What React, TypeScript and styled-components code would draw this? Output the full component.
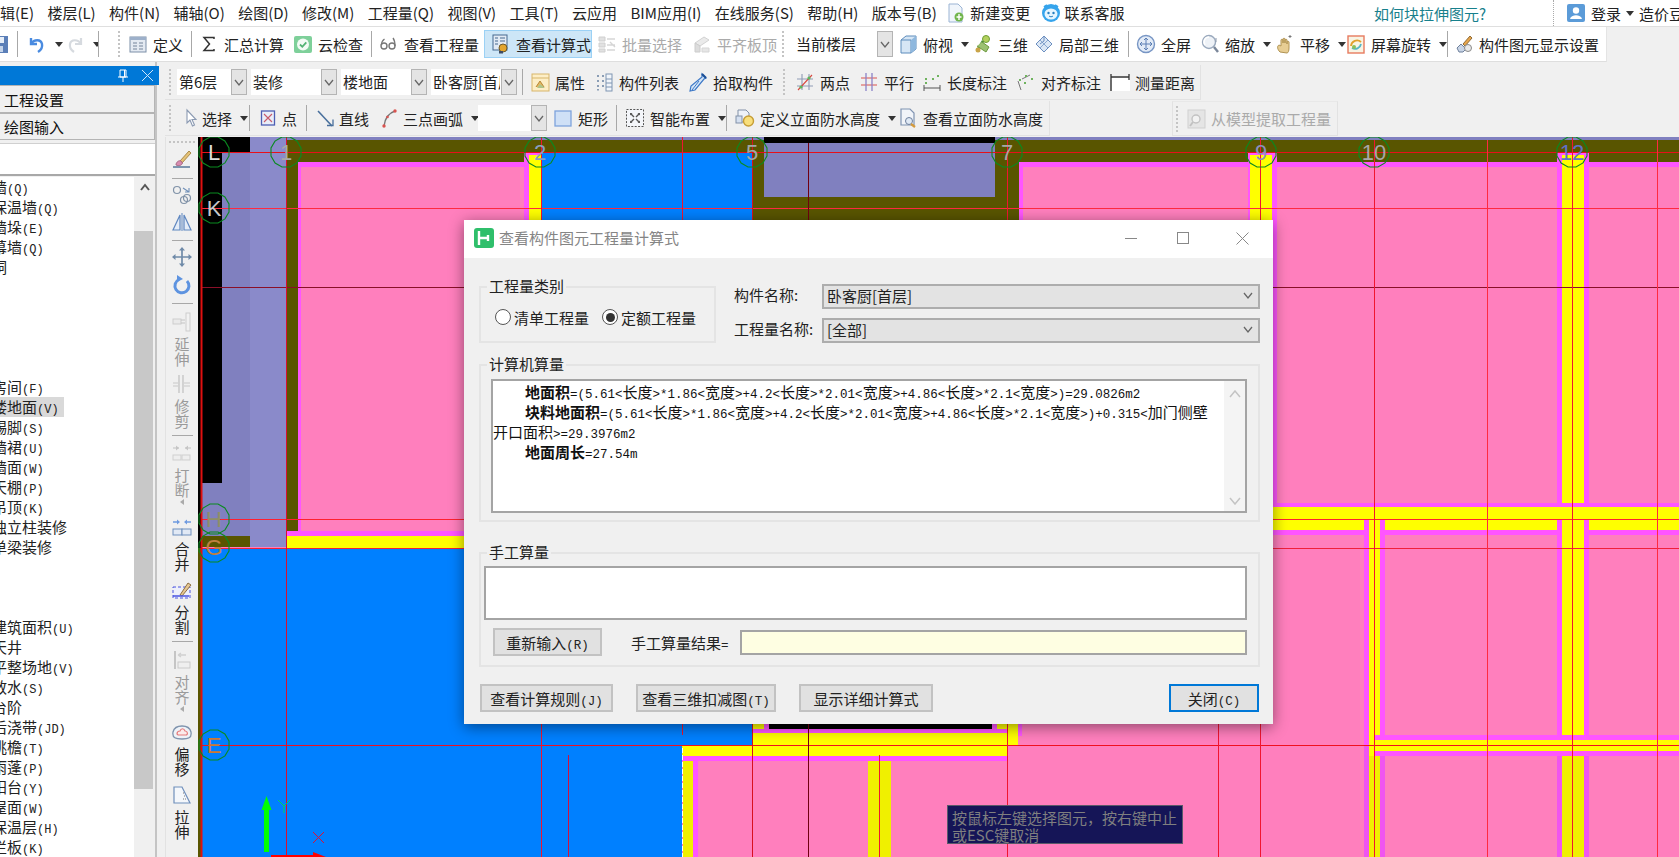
import React from 'react';
import styled, { createGlobalStyle } from 'styled-components';

const Global = createGlobalStyle`
  html, body { margin: 0; padding: 0; background: #f0f0f0; overflow: hidden; }
  * { box-sizing: border-box; }
`;

const UI = `"Noto Sans CJK SC", "Liberation Sans", sans-serif`;
const CJK = `"Noto Sans CJK SC", sans-serif`;
const MONO = `"Liberation Mono", monospace`;

/* ---------- icons ---------- */
const P = (d: string, stroke: string, w = 1.3, fill = 'none') => <path d={d} stroke={stroke} strokeWidth={w} fill={fill} />;
const icons: Record<string, React.ReactNode> = {
  save: <><rect x="1" y="2" width="18" height="17" fill="#5b7fb8" /><rect x="5" y="3" width="10" height="6" fill="#e6eef8" /><rect x="6" y="12" width="8" height="6" fill="#c4d4ea" /></>,
  undo: <>{P('M4 4v6h6', '#4a8be0', 2.4)}{P('M4 10c3-5 10-5 11 0 .6 3-1 6-4 8', '#4a8be0', 2.4)}</>,
  redo: <>{P('M16 4v6h-6', '#cfd4da', 2.2)}{P('M16 10c-3-5-10-5-11 0-.6 3 1 6 4 8', '#cfd4da', 2.2)}</>,
  define: <><rect x="2" y="3" width="16" height="15" fill="#e4eaf2" stroke="#7d8fa8" /><rect x="2" y="3" width="16" height="3" fill="#9db0ca" /><path d="M5 9h4M11 9h4M5 12h4M11 12h4M5 15h4M11 15h4" stroke="#75849a" /></>,
  sum: <>{P('M15 5V3.5H5l5.5 6.5L5 16.5h10V15', '#333', 1.5)}</>,
  check: <><rect x="1" y="2" width="18" height="17" rx="2" fill="#7ed09a" /><circle cx="10" cy="10.5" r="6" fill="#f2fbf5" />{P('M7 10.5l2.3 2.3 4-4.5', '#52b374', 1.8)}</>,
  glasses: <><circle cx="5" cy="12" r="3" fill="none" stroke="#777" strokeWidth="1.4" />{P('M2.5 11c0-3 1.5-5 3-6', '#777', 1.3)}<circle cx="13" cy="12" r="3" fill="none" stroke="#777" strokeWidth="1.4" />{P('M16 12c0-3-.5-6-2-8', '#777', 1.3)}</>,
  formula: <><rect x="2" y="1" width="14" height="15" fill="#e2eaf4" stroke="#47688f" /><path d="M4 4h3M9 4h5M4 7h3M9 7h5M4 10h3" stroke="#47688f" /><circle cx="12" cy="14" r="4" fill="#e3a52e" stroke="#6d5a2b" /><rect x="8" y="17" width="4" height="2.5" fill="#3d4c66" /></>,
  batch: <><path d="M2 3h6v4H2zM2 9h6v4H2zM2 15h6v3H2z" fill="#dcdcdc" stroke="#c8c8c8" /><path d="M10 5h8M10 11h8M10 16h8M13 8l5 5" stroke="#cfcfcf" strokeWidth="1.4" /></>,
  level: <><path d="M3 9l9-6 5 3-9 6z" fill="#e7e7e7" stroke="#cbcbcb" /><path d="M3 9v9h5v-6z" fill="#d6d6d6" stroke="#c4c4c4" /><path d="M10 14h7v4h-7z" fill="#e2e2e2" stroke="#cfcfcf" /></>,
  topview: <><path d="M3 6l5-4h10v13l-5 4H3z" fill="#d6e6f5" stroke="#5d8cbc" /><path d="M3 6h10v13" fill="none" stroke="#5d8cbc" /><path d="M13 6l5-4v13l-5 4z" fill="#8fb8de" /></>,
  three: <><circle cx="13" cy="5" r="3.5" fill="#b4d15f" stroke="#6f9e35" /><path d="M10 7L4 17" stroke="#4e8f3b" strokeWidth="2.6" /><path d="M4 12l9 6 3-5-7-5" fill="#9bc172" stroke="#6c9a3f" /><circle cx="5" cy="16" r="2.5" fill="#c9a448" /></>,
  local: <><path d="M10 2l8 8-8 8-8-8z" fill="#dbe7f5" stroke="#6c8fc0" /><path d="M6 6l8 8M14 6l-8 8" stroke="#8aa8d0" /><path d="M10 2v5l-4 3" stroke="#6c8fc0" fill="none" /></>,
  full: <><circle cx="10" cy="10" r="8.5" fill="#e2ebf7" stroke="#7795c4" strokeWidth="1.4" />{P('M10 4v12M4 10h12M10 4l-2 2M10 4l2 2M10 16l-2-2M10 16l2-2M4 10l2-2M4 10l2 2M16 10l-2-2M16 10l-2 2', '#5c7fb4', 1)}</>,
  zoom: <><circle cx="9" cy="8" r="6.5" fill="#eef2f7" stroke="#9aa9bd" strokeWidth="1.4" /><path d="M9 3a5 5 0 0 0-4 8" stroke="#fff" fill="none" strokeWidth="1.5" /><path d="M14 13l4 5" stroke="#7a879a" strokeWidth="2.4" /><path d="M16 4v4" stroke="#8a97aa" /></>,
  pan: <><path d="M5 18c-3-3-3-6-1-7l2 1V6c0-1 2-1 2 0v3-4c0-1 2-1 2 0v4-3c0-1 2-1 2 0v4-2c0-1 2-1 2 0v6c0 3-1 5-2 5z" fill="#e7cd93" stroke="#b09353" /><path d="M15 1v3M13.5 2.5h3" stroke="#777" /></>,
  rotate: <><rect x="2" y="2" width="16" height="17" fill="#f8f4e4" stroke="#e77b5f" strokeWidth="1.4" /><path d="M5 12a6 6 0 0 1 10-4" stroke="#e2a12c" strokeWidth="1.8" fill="none" /><path d="M15 10a6 6 0 0 1-9 4" stroke="#55b6c8" strokeWidth="1.8" fill="none" /><circle cx="8" cy="13" r="2" fill="#8bc05a" /></>,
  display: <><path d="M3 14l4-4 5 5-3 3H5z" fill="#c9d5e6" stroke="#6d7f9b" /><path d="M9 10l7-8 2 2-7 8z" fill="#e7a54b" stroke="#8f6b36" /><circle cx="14" cy="14" r="3.5" fill="#e9e9e9" stroke="#8a8a8a" /></>,
  attr: <><rect x="2" y="2" width="17" height="17" fill="#fdeec6" stroke="#d7b56a" /><path d="M2 6h17" stroke="#d7b56a" /><path d="M6 15l4-6 4 6" fill="#e8b760" stroke="#b48836" /><path d="M10 12l5 4H7z" fill="#b0c58a" /></>,
  list: <><path d="M3 3h2v2H3zM3 8h2v2H3zM3 13h2v2H3zM3 17h2v1.5H3zM8 3h2v2H8zM8 8h2v2H8zM8 13h2v2H8z" fill="#8a9db5" /><rect x="12" y="2" width="6" height="17" fill="#f1f5fa" stroke="#7f95b2" /><path d="M12 7h6M12 11h6M12 15h6" stroke="#7f95b2" /></>,
  pick: <><path d="M14 2l4 4-2 1-9 11-5 1 1-5L14 5z" fill="#d5e6f7" stroke="#3d78c6" strokeWidth="1.2" /><path d="M4 18l7-9" stroke="#3d78c6" /><path d="M14 2l4 4" stroke="#1c4f96" strokeWidth="2.2" /></>,
  twopoint: <>{P('M7 2v16M14 2v16M2 7h16M2 14h16', '#8f9bb5', 1.1)}{P('M3 18L17 3', '#d8463f', 1.1)}<circle cx="6" cy="15" r="1.6" fill="#5cb85c" /><circle cx="14" cy="6" r="1.6" fill="#5cb85c" /></>,
  parallel: <>{P('M2 6h16M2 13h16', '#d9534f', 1.2)}{P('M7 1v18M13 1v18', '#8a83c8', 1.3)}</>,
  lendim: <>{P('M2 16h16M2 13v6M18 13v6', '#555', 1)}<path d="M3 6h2v2H3zM15 3h2v2h-2zM3 10h2v2H3zM10 6h2v2h-2z" fill="#6fb35e" /></>,
  aligndim: <>{P('M2 9l3 9M5 18', '#777', 1)}{P('M6 7l8-4', '#777', 1)}<path d="M3 7h2v2H3zM9 3h2v2H9zM15 6h2v2h-2zM8 10h2v2H8z" fill="#6fb35e" /></>,
  measure: <><rect x="2" y="4" width="18" height="15" fill="#fff" />{P('M1 2v6M1 5h18M19 2v6', '#333', 1.3)}{P('M1 8v11', '#333', 1.4)}</>,
  select: <>{P('M5 2v13l3-3 2.5 6 2-1-2.5-5.5h4z', '#8b9ab2', 1.1, '#fff')}</>,
  point: <><rect x="1.5" y="3" width="13" height="14" fill="#e9edf8" stroke="#4d5fb4" strokeWidth="1.3" />{P('M4 6l8 8M12 6l-8 8', '#c85a6a', 1.1)}</>,
  line: <>{P('M2 3l14 15', '#496f9c', 1.6)}{P('M11 17.5h6v-6', '#496f9c', 1.3)}</>,
  arc: <>{P('M4 18C5 10 9 5 15 3', '#777', 1.4)}<circle cx="15" cy="3" r="1.7" fill="#d9534f" /><circle cx="4" cy="18" r="1.7" fill="#d9534f" /><circle cx="7.5" cy="9" r="1.3" fill="#d9534f" /></>,
  rect: <><rect x="2" y="3" width="16" height="15" fill="#cfe0f6" stroke="#7ea3dc" strokeWidth="1.3" /></>,
  smart: <><rect x="1.5" y="1.5" width="17" height="17" fill="#f4f6fa" stroke="#555" strokeDasharray="2 1.4" /><path d="M6 6l3 3M14 6l-3 3M6 14l3-3M14 14l-3-3" stroke="#555" strokeWidth="1.4" /><path d="M5 5h2.5L5 7.5zM15 5h-2.5L15 7.5zM5 15h2.5L5 12.5zM15 15h-2.5L15 12.5z" fill="#555" /></>,
  defh: <><path d="M3 2h8l3 3v9H3z" fill="#eef2f8" stroke="#8291a8" /><rect x="1" y="8" width="6" height="7" fill="#d5e0f0" stroke="#8291a8" /><circle cx="13.5" cy="13" r="5" fill="#f8df7c" stroke="#c69d35" strokeWidth="1.4" /></>,
  viewh: <><path d="M3 1h9l4 4v12H3z" fill="#f1f4f9" stroke="#7f93b1" strokeWidth="1.2" /><circle cx="11" cy="13" r="3.5" fill="#dfe9f5" stroke="#6c7f9d" /><path d="M13 16l4 3" stroke="#d49a3c" strokeWidth="2.2" /></>,
  extract: <><rect x="2" y="1" width="17" height="18" fill="#e4e4e4" stroke="#cbcbcb" /><circle cx="10" cy="10" r="4" fill="#f3f3f3" stroke="#bbb" strokeWidth="1.4" /><path d="M7 13l-3 4" stroke="#bbb" strokeWidth="2" /></>,
  newchange: <><path d="M3 1h9l4 4v14H3z" fill="#f0f5fb" stroke="#9bb4d4" /><circle cx="13" cy="14" r="4.5" fill="#71b54c" /><path d="M13 11v6M10.5 14h5" stroke="#fff" strokeWidth="1.4" /></>,
  service: <><circle cx="10" cy="10" r="9" fill="#35a4ec" /><path d="M3 4l3-2M17 4l-3-2" stroke="#35a4ec" strokeWidth="2" /><ellipse cx="10" cy="11" rx="6.5" ry="5.5" fill="#e5f5ff" /><circle cx="7.5" cy="10" r="1.2" fill="#267fc0" /><circle cx="12.5" cy="10" r="1.2" fill="#267fc0" /><path d="M8 13c1 1 3 1 4 0" stroke="#267fc0" fill="none" /></>,
  user: <><rect x="1" y="1" width="18" height="18" rx="2" fill="#5b9bd8" /><circle cx="10" cy="7.5" r="3.2" fill="#fff" /><path d="M4 16c1-5 11-5 12 0z" fill="#fff" /></>,
  brush: <><path d="M8 12L17 2l2 2-9 10z" fill="#e5c277" stroke="#a98a49" /><path d="M4 16c0-3 3-5 5-4l1.500 2c-1 3-4 3-6.500 2z" fill="#d98bb0" stroke="#a86a86" /><path d="M1 18h17" stroke="#5f7f9f" strokeWidth="1.6" /></>,
  copy: <><circle cx="5" cy="5" r="3.500" fill="none" stroke="#8092a8" strokeWidth="1.200" /><circle cx="12" cy="15" r="3.500" fill="none" stroke="#8092a8" strokeWidth="1.200" /><circle cx="15" cy="13" r="3.500" fill="none" stroke="#8092a8" strokeWidth="1.200" />{P('M11 3l6 4M17 3v4h-4', '#6f8fb8', 1.1)}</>,
  mirror: <><path d="M8 3v15H1z" fill="#e4ecf7" stroke="#5f87c0" strokeWidth="1.200" /><path d="M12 3v15h7z" fill="#e4ecf7" stroke="#5f87c0" strokeWidth="1.200" /><path d="M10 1v18" stroke="#5f87c0" /></>,
  move: <>{P('M10 1v18M1 10h18', '#6f8aa8', 1.700)}<path d="M10 0l3 3.500H7zM10 20l3-3.500H7zM0 10l3.500-3v6zM20 10l-3.500-3v6z" fill="#6f8aa8" /></>,
  rot: <>{P('M15 6a7 7 0 1 1-8-1.500', '#5d93e0', 3)}<path d="M5 0l6 4-6 3z" fill="#5d93e0" /></>,
  extend: <><rect x="14" y="1" width="4" height="18" fill="#f2f2f2" stroke="#cdcdcd" /><rect x="1" y="7" width="8" height="5" fill="#eaeaea" stroke="#cdcdcd" />{P('M9 8h4M9 11h4', '#c4c4c4', 1)}</>,
  trim: <>{P('M7 1v18M11 1v18', '#c6c6c6', 1.400)}{P('M1 9h5M1 12h5M12 9h6M12 12h6', '#d5d5d5', 1.300)}</>,
  cut: <>{P('M1 5h6M13 5h6', '#cfcfcf', 1.400)}<path d="M7 5L4 2.500v5zM13 5l3-2.500v5z" fill="#c5c5c5" /><rect x="1" y="12" width="8" height="5" fill="#eee" stroke="#cfcfcf" /><rect x="10" y="12" width="8" height="5" fill="#eee" stroke="#cfcfcf" /></>,
  merge: <>{P('M1 5h5M19 5h-5', '#6e9ae0', 1.400)}<path d="M8 5L5 2.500v5zM12 5l3-2.500v5z" fill="#6e9ae0" /><rect x="1" y="12" width="9" height="6" fill="#e1e9f5" stroke="#6e8fbd" /><rect x="10" y="12" width="9" height="6" fill="#e1e9f5" stroke="#6e8fbd" /></>,
  split: <><rect x="1" y="7" width="17" height="11" fill="#eef0fb" stroke="#4a55e0" strokeDasharray="3 2" /><path d="M8 15L16 3l3 2-9 11z" fill="#e6c792" stroke="#8d6f40" /><path d="M1 16h16" stroke="#4a55e0" strokeWidth="1.500" /></>,
  align: <>{P('M3 1v18', '#c5c5c5', 2)}<rect x="6" y="12" width="12" height="6" fill="#efefef" stroke="#cacaca" />{P('M14 5H6M6 5l3-2M6 5l3 2', '#d0d0d0', 1.300)}</>,
  offset: <><path d="M1 10c2-8 16-8 18 0 1 6-3 7-9 7S0 16 1 10z" fill="#eef2f7" stroke="#7e93ad" strokeWidth="1.300" /><path d="M5 12c0-3 2-3 3-3 1-3 4-3 5 0 3 0 3 4 1 4H6z" fill="#fbeaea" stroke="#e57b7b" strokeWidth="1.200" /></>,
  stretch: <><path d="M2 2h8l8 16H2z" fill="#f4f7fb" stroke="#6f8fbb" strokeWidth="1.200" /><path d="M11 8h1M12 11h2M11 14h4" stroke="#777" strokeDasharray="1 1" /></>,
};

const Ico = styled.svg`flex: none; display: block;`;
const Icon: React.FC<{ n: string; w?: number }> = ({ n, w = 20 }) => (
  <Ico width={w} height={20} viewBox={`0 0 ${w} 20`}>{icons[n]}</Ico>
);

/* ---------- shell ---------- */
const Shell = styled.div`
  position: relative; width: 1679px; height: 857px; overflow: hidden;
  background: #f0f0f0; font-family: ${UI}; font-size: 15px; color: #222;
`;
const MenuBar = styled.div`
  display: flex; align-items: center; height: 27px; background: #fff;
  border-bottom: 1px solid #dfdfdf; white-space: nowrap; overflow: hidden; gap: 13.4px;
`;
const MenuItem = styled.span`
  flex: none; color: #222; line-height: 20px;
  &:first-child { margin-left: -15px; }
`;
const MenuIconItem = styled(MenuItem)<{ $ml: number }>`display: flex; align-items: center; gap: 4px; margin-left: ${p => p.$ml}px;`;
const HelpLink = styled.span`flex: none; margin-left: 236px; color: #17808c;`;
const UserArea = styled.div`
  flex: none; margin-left: auto; width: 126px; height: 26px; display: flex; align-items: center;
  gap: 5px; padding-left: 12px; border-left: 1px dotted #aaa; overflow: hidden;
`;
const Caret = styled.i`
  flex: none; width: 0; height: 0; display: block;
  border-left: 4px solid transparent; border-right: 4px solid transparent; border-top: 5px solid #333;
`;
const ToolbarWhite = styled.div`
  display: flex; height: 35px; width: 1607px; background: #fff; border-right: 1px solid #e4e4e4; border-bottom: 1px solid #dedede;
`;
const Lower = styled.div`display: flex; height: 795px;`;

/* ---------- toolbar cells ---------- */
const Cell = styled.div<{ $w: number; $dis?: boolean }>`
  flex: none; width: ${p => p.$w}px; height: 100%; display: flex; align-items: center; gap: 5px;
  white-space: nowrap; overflow: hidden; color: ${p => (p.$dis ? '#aaa' : '#222')};
  ${p => p.$dis && 'svg { opacity: .85; }'}
`;
const ActiveCell = styled(Cell)`
  height: 28px; align-self: center; padding-left: 6px;
  background: #cde6f7; border: 1px solid #9bd1f5;
`;
const CaretGap = styled.span`display: block; margin-left: 3px;`;
const OffIcon = styled.span`display: block; margin-left: -11px;`;
const Sep = styled.div<{ $w: number }>`
  flex: none; width: ${p => p.$w}px; height: 100%; display: flex; align-items: center;
  &::before { content: ''; display: block; width: 1px; height: 26px; background: #a8a8a8; }
`;
const Grip = styled.div<{ $w: number }>`
  flex: none; width: ${p => p.$w}px; height: 100%; display: flex; align-items: center;
  &::before { content: ''; display: block; width: 1px; height: 26px; border-left: 2px dotted #c4c4c4; }
`;
const Blank = styled.div<{ $w: number }>`flex: none; width: ${p => p.$w}px;`;
const Combo = styled.div<{ $w: number }>`
  width: ${p => p.$w}px; height: 26px; display: flex; background: #fff; overflow: hidden;
`;
const ComboText = styled.span`flex: 1; min-width: 0; padding-left: 2px; line-height: 26px; overflow: hidden;`;
const ComboArrow = styled.span`
  flex: none; width: 16px; height: 26px; display: flex; align-items: center; justify-content: center;
  background: #e4e4e4; border: 1px solid #b4b4b4; margin-left: 1px;
`;
const Chevron: React.FC<{ c?: string; s?: number }> = ({ c = '#666', s = 9 }) => (
  <Ico width={s + 1} height={s} viewBox="0 0 10 9"><path d="M1 2l4 5 4-5" fill="none" stroke={c} strokeWidth="1.3" /></Ico>
);

type T =
  | { k: 'gap'; x: number }
  | { k: 'sep'; x: number }
  | { k: 'grip'; x: number }
  | { k: 'combo'; x: number; t: string; w: number }
  | { k: 'item'; x: number; i?: string; t?: string; a?: boolean; d?: boolean; on?: boolean; iw?: number; off?: boolean };

const it = (x: number, i: string, t?: string, a?: boolean, d?: boolean, iw?: number): T => ({ k: 'item', x, i, t, a, d, iw });

const Tools: React.FC<{ items: T[]; end: number }> = ({ items, end }) => (
  <>
    {items.map((e, idx) => {
      const w = (items[idx + 1]?.x ?? end) - e.x;
      if (e.k === 'gap') return <Blank key={idx} $w={w} />;
      if (e.k === 'sep') return <Sep key={idx} $w={w} />;
      if (e.k === 'grip') return <Grip key={idx} $w={w} />;
      if (e.k === 'combo')
        return (
          <Cell key={idx} $w={w}>
            <Combo $w={e.w}><ComboText>{e.t}</ComboText><ComboArrow><Chevron /></ComboArrow></Combo>
          </Cell>
        );
      const C = e.on ? ActiveCell : Cell;
      return (
        <C key={idx} $w={w} $dis={e.d}>
          {e.i && (e.off ? <OffIcon><Icon n={e.i} /></OffIcon> : <Icon n={e.i} w={e.iw} />)}
          {e.t && <span>{e.t}</span>}
          {e.a && <CaretGap><Caret /></CaretGap>}
        </C>
      );
    })}
  </>
);

const row2: T[] = [
  { k: 'item', x: 0, i: 'save', off: true }, { k: 'sep', x: 17 }, { k: 'gap', x: 18 }, it(27, 'undo', undefined, true), it(65, 'redo', undefined, true, true), { k: 'sep', x: 98 }, { k: 'gap', x: 99 },
  { k: 'grip', x: 118 }, it(128, 'define', '定义'), { k: 'sep', x: 191 }, it(199, 'sum', '汇总计算'), it(293, 'check', '云检查'),
  { k: 'sep', x: 371 }, it(379, 'glasses', '查看工程量'),
  { k: 'item', x: 484, i: 'formula', t: '查看计算式', on: true }, { k: 'gap', x: 592 },
  it(597, 'batch', '批量选择', false, true), it(692, 'level', '平齐板顶', false, true), { k: 'grip', x: 782 },
  { k: 'combo', x: 794, t: '当前楼层', w: 99 }, it(898, 'topview', '俯视', true), it(973, 'three', '三维'), it(1034, 'local', '局部三维'),
  { k: 'sep', x: 1128 }, it(1136, 'full', '全屏'), it(1200, 'zoom', '缩放', true), it(1275, 'pan', '平移', true), it(1346, 'rotate', '屏幕旋转', true),
  { k: 'sep', x: 1447 }, it(1454, 'display', '构件图元显示设置'),
];
const row3: T[] = [
  { k: 'gap', x: 165 }, { k: 'grip', x: 169 }, { k: 'combo', x: 177, t: '第6层', w: 70 }, { k: 'combo', x: 251, t: '装修', w: 86 },
  { k: 'combo', x: 341, t: '楼地面', w: 86 }, { k: 'combo', x: 431, t: '卧客厨[首层]', w: 86 }, { k: 'sep', x: 522 },
  it(530, 'attr', '属性'), it(594, 'list', '构件列表'), it(688, 'pick', '拾取构件'), { k: 'grip', x: 783 },
  it(795, 'twopoint', '两点'), it(859, 'parallel', '平行'), it(922, 'lendim', '长度标注'), it(1016, 'aligndim', '对齐标注'), it(1110, 'measure', '测量距离'),
];
const row4: T[] = [
  { k: 'gap', x: 165 }, { k: 'grip', x: 169 }, it(182, 'select', '选择', true, false, 15), { k: 'sep', x: 249 },
  it(260, 'point', '点', false, false, 17), { k: 'sep', x: 306 }, it(316, 'line', '直线', false, false, 18), it(380, 'arc', '三点画弧', true, false, 18),
  { k: 'combo', x: 478, t: '', w: 69 }, it(553, 'rect', '矩形'), { k: 'sep', x: 616 }, it(625, 'smart', '智能布置', true, false, 20),
  { k: 'sep', x: 726 }, it(735, 'defh', '定义立面防水高度', true), it(898, 'viewh', '查看立面防水高度'),
];
const row4b: T[] = [{ k: 'gap', x: 1172 }, { k: 'grip', x: 1175 }, it(1185, 'extract', '从模型提取工程量', false, true)];

const Bar = styled.div<{ $w: number }>`
  flex: none; display: flex; height: 35px; width: ${p => p.$w}px; background: #f0f0f0;
  border-right: 1px solid #e2e2e2; border-bottom: 1px solid #e2e2e2;
`;
const BarOffset = styled(Bar)`border-left: 1px solid #e2e2e2; border-top: 1px solid #e8e8e8;`;
const BarRow = styled.div`display: flex; height: 35px; margin-bottom: 1px;`;
const BarSpacer = styled.div`flex: none; width: 122px;`;

/* ---------- left panel ---------- */
const Panel = styled.div`
  flex: none; width: 157px; padding-top: 4px; border-right: 2px solid #c4c4c4; display: flex; flex-direction: column;
`;
const PanelHead = styled.div`
  flex: none; width: 159px; height: 19px; background: #0078d7; display: flex; align-items: center; justify-content: flex-end; gap: 11px; padding-right: 5px;
`;
const PanelTab = styled.div<{ $h: number }>`
  flex: none; height: ${p => p.$h}px; border: 1px solid #b4b4b4; border-left: none; background: #f0f0f0;
  padding-left: 4px; display: flex; align-items: center; font-size: 15px; color: #111;
`;
const SearchBox = styled.div`
  flex: none; height: 33px; margin-top: 3px; background: #fff; border-bottom: 2px solid #a8a8a8; border-top: 1px solid #d0d0d0;
`;
const ListWrap = styled.div`flex: 1; min-height: 0; display: flex; background: #fff; margin-top: 1px; overflow: hidden;`;
const ListCol = styled.div`flex: none; width: 134px; overflow: hidden;`;
const ListRow = styled.div`height: 20px; line-height: 20px; white-space: nowrap; font-family: ${CJK}; font-size: 15px; color: #222;`;
const ListLabel = styled.span<{ $on?: boolean }>`
  display: inline-block; height: 20px; margin-left: -8px; padding-right: 5px;
  background: ${p => (p.$on ? '#d9d9d9' : 'transparent')};
`;
const Track = styled.div`
  flex: none; width: 21px; background: #f0f0f0; display: flex; flex-direction: column; align-items: center;
`;
const TrackUp = styled.div`flex: none; height: 54px; padding-top: 6px; display: flex; justify-content: center; align-self: stretch;`;
const Thumb = styled.div`flex: none; width: 19px; margin-right: 2px; height: 558px; background: #c8c8c8;`;

/* SimSun-like mix of full width CJK and half width latin */
const Half = styled.span<{ $size: number }>`font-family: ${MONO}; font-size: ${p => p.$size}px;`;
const Sim: React.FC<{ t: string; size?: number }> = ({ t, size = 12.5 }) => (
  <>
    {t.split(/([\u0000-\u00ff]+)/).filter(Boolean).map((s, i) =>
      /^[\u0000-\u00ff]/.test(s) ? <Half key={i} $size={size}>{s}</Half> : <React.Fragment key={i}>{s}</React.Fragment>
    )}
  </>
);

const listData = [
  '墙(Q)', '保温墙(Q)', '墙垛(E)', '幕墙(Q)', '洞', '', '', '', '', '', '房间(F)', '楼地面(V)', '踢脚(S)', '墙裙(U)', '墙面(W)', '天棚(P)', '吊顶(K)',
  '独立柱装修', '单梁装修', '', '', '', '建筑面积(U)', '天井', '平整场地(V)', '散水(S)', '台阶', '后浇带(JD)', '挑檐(T)', '雨蓬(P)', '阳台(Y)', '屋面(W)', '保温层(H)', '栏板(K)',
];

/* ---------- vertical toolbar ---------- */
const RightCol = styled.div`flex: none; width: 1522px; padding: 3px 0 0 8px; display: flex; flex-direction: column;`;
const Work = styled.div`flex: 1; min-height: 0; display: flex;`;
const WorkBody = styled.div`flex: none; display: flex; height: 720px;`;
const VBar = styled.div`flex: none; width: 33px; background: #f0f0f0; border-left: 1px solid #e2e2e2; display: flex; flex-direction: column; align-items: center;`;
const VCell = styled.div<{ $h: number; $dis?: boolean }>`
  flex: none; height: ${p => p.$h}px; width: 100%; display: flex; flex-direction: column; align-items: center; overflow: hidden;
  font-size: 15px; line-height: 15px; color: ${p => (p.$dis ? '#9a9a9a' : '#222')};
`;
const VText = styled.span`display: block; width: 16px; margin-top: 4px; text-align: center; word-break: break-all;`;
const VArrow = styled.i`
  display: block; margin-top: 2px; width: 0; height: 0;
  border-top: 3.5px solid transparent; border-bottom: 3.5px solid transparent; border-right: 4px solid #aaa;
`;
const VSep = styled.div<{ $h: number }>`flex: none; height: ${p => p.$h}px; width: 100%; display: flex; justify-content: center; &::before { content: ''; width: 21px; height: 1px; background: #a8a8a8; }`;
const VGrip = styled.div<{ $h: number }>`flex: none; height: ${p => p.$h}px; width: 100%; padding: 4px 3px 0; &::before { content: ''; display: block; border-top: 2px dotted #c4c4c4; }`;

type V = { y: number; s?: 'sep' | 'grip'; i?: string; t?: string; d?: boolean; a?: boolean };
const vbar: V[] = [
  { y: 137, s: 'grip' }, { y: 149, i: 'brush' }, { y: 178, s: 'sep' }, { y: 185, i: 'copy' }, { y: 212, i: 'mirror' }, { y: 240, s: 'sep' }, { y: 247, i: 'move' }, { y: 275, i: 'rot' },
  { y: 303, s: 'sep' }, { y: 312, i: 'extend', t: '延伸', d: true }, { y: 374, i: 'trim', t: '修剪', d: true }, { y: 435, s: 'sep' }, { y: 443, i: 'cut', t: '打断', d: true, a: true },
  { y: 517, i: 'merge', t: '合并' }, { y: 580, i: 'split', t: '分割' }, { y: 641, s: 'sep' }, { y: 650, i: 'align', t: '对齐', d: true, a: true }, { y: 722, i: 'offset', t: '偏移' }, { y: 785, i: 'stretch', t: '拉伸' },
];

/* ---------- CAD canvas ---------- */
const CanvasArea = styled.div`position: relative; flex: none; width: 1481px; height: 720px; overflow: hidden;`;
const CadSvg = styled.svg`display: block;`;
const PINK = '#ff7fbd', MAG = '#ff55ff', YEL = '#ffff00', OLV = '#595500', BLU = '#0080ff', LAV1 = '#8080bf', LAV2 = '#8a8aca', MAGD = '#f055f0', YELD = '#f0f000';
const rects: [number, number, number, number, string][] = [
  [198, 137, 1481, 720, PINK],
  [198, 137, 1481, 3, LAV1],
  [286, 140, 1393, 22, OLV],
  [298, 162, 1381, 5, MAG],
  [298, 162, 3, 369, MAG],
  [250, 137, 36, 410, LAV2],
  [222, 152, 28, 331, LAV1],
  [201, 483, 49, 64, LAV1],
  [198, 137, 52, 15, '#000'],
  [198, 152, 24, 331, '#000'],
  [198, 483, 3, 65, '#000'],
  [201, 536, 49, 11, OLV],
  [286, 140, 12, 391, OLV],
  [286, 531, 300, 5, MAG],
  [286, 536, 300, 12, YEL],
  [198, 548, 3, 309, OLV],
  [201, 548, 481, 309, BLU],
  [682, 548, 71, 197, BLU],
  [524, 152, 17, 100, MAG],
  [529, 155, 12, 100, YEL],
  [541, 152, 211, 100, BLU],
  [752, 140, 267, 100, OLV],
  [764, 143, 231, 54, LAV1],
  [764, 137, 231, 6, '#000'],
  [1019, 162, 4, 80, MAG],
  [1248, 152, 29, 352, MAG],
  [1250, 155, 22, 349, YEL],
  [1557, 152, 32, 351, MAG],
  [1562, 155, 22, 348, YEL],
  [1270, 503, 409, 4, MAG],
  [1270, 507, 409, 12, YEL],
  [1270, 530, 94, 5, MAG], [1385, 530, 172, 5, MAG], [1589, 530, 90, 5, MAG],
  [1270, 519, 94, 11, YEL], [1385, 519, 172, 11, YEL], [1589, 519, 90, 11, YEL],
  [1364, 519, 21, 216, MAG], [1369, 519, 11, 216, YEL],
  [1557, 519, 32, 216, MAG], [1562, 519, 22, 216, YEL],
  [1364, 745, 5, 112, MAGD], [1380, 756, 5, 101, MAGD], [1369, 735, 11, 21, YEL], [1369, 756, 11, 101, YELD], [1364, 735, 5, 10, MAG],
  [1557, 756, 32, 101, MAGD], [1562, 756, 22, 101, YELD],
  [1375, 735, 304, 5, MAG], [1375, 740, 304, 11, YEL], [1375, 751, 304, 5, MAG],
  [753, 724, 265, 5, YEL], [764, 724, 233, 5, MAG], [769, 724, 223, 5, '#000'],
  [753, 729, 254, 4, MAG], [753, 733, 254, 12, YEL], [1007, 724, 11, 21, YEL], [1018, 724, 4, 12, MAG],
  [682, 746, 325, 10, YEL], [682, 756, 325, 5, MAG],
  [683, 761, 10, 96, YELD], [693, 761, 5, 96, MAG], [868, 761, 23, 96, YELD],
];
const RED = '#f01530';
const hLines: [number, number, number, string, number][] = [
  [152, 201, 1679, '#e8101a', 1], [208, 201, 1679, '#ff2a40', 1], [287, 201, 1679, '#8a1028', 1], [519, 201, 1679, '#ff2030', 1],
  [548, 201, 1679, '#f0203a', 1], [745, 201, 1679, '#f01020', 1],
];
const vLines: [number, number, number, string, number][] = [
  [201, 137, 857, '#e01010', 2], [286, 137, 857, '#d81030', 1], [541, 137, 857, RED, 1], [568, 755, 857, '#d01040', 1], [682, 137, 735, RED, 1],
  [752, 137, 857, '#d81020', 1], [808, 143, 857, '#700010', 1], [879, 755, 857, RED, 1], [1007, 137, 857, RED, 1], [1218, 724, 857, RED, 1],
  [1260, 137, 857, RED, 1], [1374, 140, 857, RED, 1], [1487, 140, 857, '#ff2a40', 1], [1572, 137, 857, RED, 1], [1657, 140, 857, '#ff2a40', 1],
];
const axes: [number, number, string, string][] = [
  [214, 152, 'L', '#dddddd'], [214, 208, 'K', '#c8c8c8'], [214, 519, 'H', '#8f8f66'], [214, 547, 'G', '#c08040'], [214, 745, 'E', '#d07830'],
  [286, 152, '1', '#a8a8a8'], [540, 152, '2', '#8aa0c0'], [752, 152, '5', '#a0a8a8'], [1007, 152, '7', '#a8a8a8'], [1261, 152, '9', '#8a90c0'], [1374, 152, '10', '#a8a8a8'], [1572, 152, '12', '#6070c8'],
];
const ring = (cx: number, cy: number) =>
  Array.from({ length: 12 }, (_, i) => {
    const a = (i / 12) * Math.PI * 2 + 0.26;
    return `${(cx + Math.cos(a) * 15.5).toFixed(1)},${(cy + Math.sin(a) * 15.5).toFixed(1)}`;
  }).join(' ');

const Cad: React.FC = () => (
  <CadSvg width={1481} height={720} viewBox="198 137 1481 720">
    {rects.map(([x, y, w, h, f], i) => <rect key={i} x={x} y={y} width={w} height={h} fill={f} />)}
    <line x1="682.500" y1="748" x2="682.500" y2="857" stroke="#fff" strokeDasharray="5 2" />
    {hLines.map(([y, a, b, c, w], i) => <line key={i} x1={a} x2={b} y1={y + 0.5} y2={y + 0.5} stroke={c} strokeWidth={w} />)}
    {vLines.map(([x, a, b, c, w], i) => <line key={i} x1={x + 0.5} x2={x + 0.5} y1={a} y2={b} stroke={c} strokeWidth={w} />)}
    {axes.map(([x, y, t, c]) => (
      <g key={t}>
        <polygon points={ring(x, y)} fill="none" stroke="#0a8a20" strokeWidth="1.100" />
        <text x={x} y={y + 8} textAnchor="middle" fontFamily="Liberation Sans, sans-serif" fontSize="22" fill={c}>{t}</text>
      </g>
    ))}
    <path d="M264 810h5v42h-5z" fill="#00ff00" />
    <path d="M266.500 796l5 14h-10z" fill="#00ff00" />
    <path d="M278 800l6 6 6-6M284 806v7" fill="none" stroke="#00d060" />
    <path d="M271 855h46v2h-46z" fill="#ff0000" />
    <path d="M313 852l13 5h-13z" fill="#ff0000" />
    <path d="M313 832l11 11M324 832l-11 11" fill="none" stroke="#e01030" />
  </CadSvg>
);
const Tip = styled.div`
  position: absolute; left: 749px; top: 668px; width: 236px; height: 39px; padding: 3px 4px;
  background: #151557; border: 1px solid #5a5a6a; color: #7f7f7f; font-family: ${CJK}; font-size: 15px; line-height: 17px; white-space: nowrap; overflow: hidden;
`;

/* ---------- dialog ---------- */
const Dialog = styled.div`
  position: absolute; left: 464px; top: 220px; width: 809px; height: 504px; background: #f0f0f0;
  box-shadow: 0 3px 14px rgba(0, 0, 0, .45); display: flex; flex-direction: column; font-family: ${CJK}; color: #222;
`;
const TitleBar = styled.div`flex: none; height: 38px; background: #fff; display: flex; align-items: center; padding: 0 0 2px 10px;`;
const TitleText = styled.span`margin-left: 5px; color: #858585; font-size: 15px; margin-bottom: 1px;`;
const WinBtns = styled.div`margin-left: auto; display: flex; height: 100%; align-items: center; padding-right: 24px; gap: 40px;`;
const CloseGlyph = styled.span`display: block; margin-left: 7px;`;
const DialogBody = styled.div`flex: 1; padding: 26px 13px 0 15px; display: flex; flex-direction: column;`;
const TopRow = styled.div`flex: none; display: flex; height: 59px;`;
const Group = styled.div<{ $h: number; $mt?: number }>`
  position: relative; flex: none; height: ${p => p.$h}px; margin-top: ${p => p.$mt ?? 0}px; border: 2px solid #e4e4e4;
`;
const Legend = styled.span`
  position: absolute; left: 6px; top: -11px; padding: 0 2px; background: #f0f0f0; font-size: 15px; line-height: 18px;
`;
const KindGroup = styled(Group)`width: 237px; margin-top: 2px; display: flex; align-items: center; padding: 5px 0 0 14px; font-size: 15px;`;
const Radio = styled.span<{ $on?: boolean }>`
  flex: none; width: 16px; height: 16px; border-radius: 50%; border: 1px solid #555; background: #fff; display: flex; align-items: center; justify-content: center; margin-right: 3px;
  &::after { content: ''; width: 9px; height: 9px; border-radius: 50%; background: ${p => (p.$on ? '#333' : 'transparent')}; }
`;
const RadioLabel = styled.span<{ $mr?: number }>`margin-right: ${p => p.$mr ?? 0}px;`;
const NameForm = styled.div`margin-left: 18px; flex: none; width: 526px; display: flex; flex-direction: column; gap: 9px;`;
const NameRow = styled.div`display: flex; align-items: center; height: 25px; font-size: 15px;`;
const NameLabel = styled.span`flex: none; width: 88px; white-space: nowrap; margin-top: -4px;`;
const Select = styled.div`
  flex: 1; height: 25px; background: #e3e3e3; border: 2px solid #adadad; display: flex; align-items: center; justify-content: space-between; padding: 0 5px 2px 3px; font-size: 15px;
`;
const Memo = styled.div`
  margin: 13px 11px 0 10px; height: 134px; background: #fff; border: 2px solid #a4a4a4; padding: 1px 0 0 0; position: relative;
  font-size: 15px; line-height: 20px; white-space: nowrap; color: #111;
`;
const MemoLine = styled.div<{ $indent?: boolean }>`height: 20px; padding-left: ${p => (p.$indent ? '32px' : '0')};`;
const MemoScroll = styled.div`
  position: absolute; right: 0; top: 0; bottom: 0; width: 21px; background: #f4f4f4; display: flex; flex-direction: column; justify-content: space-between; align-items: center; padding: 9px 0 6px;
`;
const InputBox = styled.div`margin: 12px 11px 0 3px; height: 54px; background: #fff; border: 2px solid #a4a4a4;`;
const ManualRow = styled.div`display: flex; align-items: center; margin: 7px 11px 0 12px; height: 30px;`;
const DlgButton = styled.button<{ $w: number; $primary?: boolean }>`
  flex: none; width: ${p => p.$w}px; height: 28px; padding: 0; background: #e1e1e1; font-family: ${CJK}; font-size: 15px; color: #222;
  border: 2px solid ${p => (p.$primary ? '#0078d7' : '#c2c2c2')}; white-space: nowrap;
`;
const ResultLabel = styled.span`flex: none; margin-left: 29px; width: 109px; font-size: 15px; white-space: nowrap;`;
const ResultInput = styled.div`flex: 1; height: 25px; background: #fefee2; border: 2px solid #a4a4a4;`;
const FootRow = styled.div`flex: none; display: flex; margin-top: 17px; padding-left: 1px;`;
const Gap = styled.div<{ $w: number }>`flex: none; width: ${p => p.$w}px;`;

const Logo = () => (
  <Ico width={20} height={20} viewBox="0 0 20 20">
    <rect width="20" height="20" rx="3" fill="#2fbf6b" />
    <path d="M5 3v14M5 10h10M14 7v6" stroke="#fff" strokeWidth="2.400" fill="none" />
  </Ico>
);

const F1 = '=(5.61<长度>*1.86<宽度>+4.2<长度>*2.01<宽度>+4.86<长度>*2.1<宽度>)';

export default function App() {
  return (
    <Shell>
      <Global />
      <MenuBar>
        {['编辑(E)', '楼层(L)', '构件(N)', '辅轴(O)', '绘图(D)', '修改(M)', '工程量(Q)', '视图(V)', '工具(T)', '云应用', 'BIM应用(I)', '在线服务(S)', '帮助(H)', '版本号(B)'].map(m => <MenuItem key={m}>{m}</MenuItem>)}
        <MenuIconItem $ml={-4}><Icon n="newchange" />新建变更</MenuIconItem>
        <MenuIconItem $ml={-3}><Icon n="service" />联系客服</MenuIconItem>
        <HelpLink>如何块拉伸图元?</HelpLink>
        <UserArea><Icon n="user" />登录<Caret />造价豆</UserArea>
      </MenuBar>
      <ToolbarWhite><Tools items={row2} end={1607} /></ToolbarWhite>
      <Lower>
        <Panel>
          <PanelHead>
            <Ico width={14} height={14} viewBox="0 0 14 14"><path d="M4 1h6v7H4zM2 8h10M7 8v5M8.500 1v7" fill="none" stroke="#fff" /></Ico>
            <Ico width={13} height={13} viewBox="0 0 13 13"><path d="M1 1l11 11M12 1L1 12" stroke="#cfe6fa" fill="none" /></Ico>
          </PanelHead>
          <PanelTab $h={28}>工程设置</PanelTab>
          <PanelTab $h={27}>绘图输入</PanelTab>
          <SearchBox />
          <ListWrap>
            <ListCol>
              {listData.map((t, i) => (
                <ListRow key={i}>{t && <ListLabel $on={t === '楼地面(V)'}><Sim t={t} size={12} /></ListLabel>}</ListRow>
              ))}
            </ListCol>
            <Track>
              <TrackUp><Ico width={12} height={9} viewBox="0 0 12 9"><path d="M2 7l4-5 4 5" fill="none" stroke="#555" strokeWidth="2" /></Ico></TrackUp>
              <Thumb />
            </Track>
          </ListWrap>
        </Panel>
        <RightCol>
          <BarRow><Bar $w={1036}><Tools items={row3.map(e => ({ ...e, x: e.x - 165 }))} end={1036} /></Bar></BarRow>
          <BarRow>
            <Bar $w={885}><Tools items={row4.map(e => ({ ...e, x: e.x - 165 }))} end={885} /></Bar>
            <BarSpacer />
            <BarOffset $w={166}><Tools items={row4b.map(e => ({ ...e, x: e.x - 1172 }))} end={166} /></BarOffset>
          </BarRow>
          <Work>
            <WorkBody>
              <VBar>
                {vbar.map((v, i) => {
                  const h = (vbar[i + 1]?.y ?? 857) - v.y;
                  if (v.s === 'sep') return <VSep key={i} $h={h} />;
                  if (v.s === 'grip') return <VGrip key={i} $h={h} />;
                  return (
                    <VCell key={i} $h={h} $dis={v.d}>
                      <Icon n={v.i as string} />
                      {v.t && <VText>{v.t}</VText>}
                      {v.a && <VArrow />}
                    </VCell>
                  );
                })}
              </VBar>
              <CanvasArea>
                <Cad />
                <Tip>{'按鼠标左键选择图元\uFF0C按右键中止'}<br />或ESC键取消</Tip>
              </CanvasArea>
            </WorkBody>
          </Work>
        </RightCol>
      </Lower>

      <Dialog>
        <TitleBar>
          <Logo />
          <TitleText>查看构件图元工程量计算式</TitleText>
          <WinBtns>
            <Ico width={12} height={12} viewBox="0 0 12 12"><path d="M0 6.500h12" stroke="#888" /></Ico>
            <Ico width={12} height={12} viewBox="0 0 12 12"><rect x=".5" y=".5" width="11" height="11" fill="none" stroke="#888" /></Ico>
            <CloseGlyph><Ico width={13} height={13} viewBox="0 0 13 13"><path d="M.5.5l12 12M12.500.5l-12 12" stroke="#888" fill="none" /></Ico></CloseGlyph>
          </WinBtns>
        </TitleBar>
        <DialogBody>
          <TopRow>
            <KindGroup $h={57}>
              <Legend>工程量类别</Legend>
              <Radio /><RadioLabel $mr={13}>清单工程量</RadioLabel>
              <Radio $on /><RadioLabel>定额工程量</RadioLabel>
            </KindGroup>
            <NameForm>
              <NameRow><NameLabel>构件名称:</NameLabel><Select><span>卧客厨[首层]</span><Chevron /></Select></NameRow>
              <NameRow><NameLabel>工程量名称:</NameLabel><Select><span>[全部]</span><Chevron /></Select></NameRow>
            </NameForm>
          </TopRow>
          <Group $h={158} $mt={21}>
            <Legend>计算机算量</Legend>
            <Memo>
              <MemoLine $indent><b>地面积</b><Sim t={`${F1}=29.0826m2`} /></MemoLine>
              <MemoLine $indent><b>块料地面积</b><Sim t={`${F1}+0.315<加门侧壁`} /></MemoLine>
              <MemoLine><Sim t="开口面积>=29.3976m2" /></MemoLine>
              <MemoLine $indent><b>地面周长</b><Sim t="=27.54m" /></MemoLine>
              <MemoScroll>
                <Ico width={12} height={8} viewBox="0 0 12 8"><path d="M1 7l5-6 5 6" fill="none" stroke="#c4c4c4" strokeWidth="1.500" /></Ico>
                <Ico width={12} height={8} viewBox="0 0 12 8"><path d="M1 1l5 6 5-6" fill="none" stroke="#c4c4c4" strokeWidth="1.500" /></Ico>
              </MemoScroll>
            </Memo>
          </Group>
          <Group $h={115} $mt={30}>
            <Legend>手工算量</Legend>
            <InputBox />
            <ManualRow>
              <DlgButton $w={109}><Sim t="重新输入(R)" /></DlgButton>
              <ResultLabel><Sim t="手工算量结果=" /></ResultLabel>
              <ResultInput />
            </ManualRow>
          </Group>
          <FootRow>
            <DlgButton $w={133}><Sim t="查看计算规则(J)" /></DlgButton>
            <Gap $w={23} />
            <DlgButton $w={140}><Sim t="查看三维扣减图(T)" /></DlgButton>
            <Gap $w={23} />
            <DlgButton $w={134}>显示详细计算式</DlgButton>
            <Gap $w={236} />
            <DlgButton $w={90} $primary><Sim t="关闭(C)" /></DlgButton>
          </FootRow>
        </DialogBody>
      </Dialog>
    </Shell>
  );
}
